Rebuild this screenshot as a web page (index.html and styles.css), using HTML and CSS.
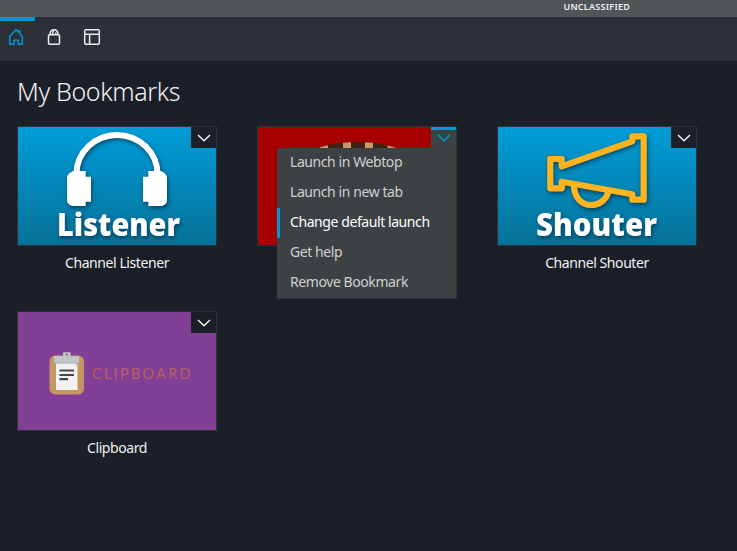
FILE: index.html
```html
<!DOCTYPE html>
<html lang="en">
<head>
<meta charset="utf-8">
<title>My Bookmarks</title>
<link rel="stylesheet" href="styles.css">
</head>
<body>
<div class="banner"><span class="banner-text">UNCLASSIFIED</span></div>
<nav class="toolbar">
  <a class="tab active"><svg width="16" height="18" viewBox="0 0 16 18"><path d="M1.700 8.500 8 1.700l2.300 2.300V3h1.700v3l2.300 2.500V16.300H10.300v-4H6v4H1.700z"/></svg></a>
  <a class="tab bag"><svg width="14" height="18" viewBox="0 0 14 18"><rect x="1.500" y="6.700" width="11" height="9.600" rx="1"/><path d="M3 6.500C3 3 5 1.700 7 1.700S11 3 11 6.500M5.500 6.500C5.500 4 6.500 3 7 2.600M8.800 6.500V4.500"/></svg></a>
  <a class="tab"><svg width="18" height="18" viewBox="0 0 18 18"><rect x="1.700" y="1.700" width="14.600" height="14.600" rx="1.200"/><path d="M2 6.200h14M6.600 6.200v10"/></svg></a>
</nav>
<main>
  <h1>My Bookmarks</h1>
  <div class="grid">
    <article class="card">
      <div class="thumb blue">
        <svg class="art" viewBox="0 0 198 118">
          <g class="shadow">
            <path class="band" d="M58.500 48V47A40.500 39 0 0 1 139.500 47V48"/>
            <path class="white" d="M55 44H67.700V49.700H73V74.700H67.700V79H54Q49 77 49 74V50Q50 46 55 44zM143 44H130.300V49.700H125V74.700H130.300V79H144Q149 77 149 74V50Q148 46 143 44z"/>
            <text class="logo" x="39" y="108.500" textLength="123" lengthAdjust="spacingAndGlyphs">Listener</text>
          </g>
        </svg>
        <button class="menu-btn"><svg width="14" height="8" viewBox="0 0 14 8"><path d="M1 1l6 5.800L13 1"/></svg></button>
      </div>
      <p>Channel Listener</p>
    </article>
    <article class="card">
      <div class="thumb red">
        <svg class="art" viewBox="0 0 198 118">
          <clipPath id="barrel"><ellipse cx="99" cy="59" rx="77" ry="44"/></clipPath>
          <g clip-path="url(#barrel)">
            <path class="dark" d="M20 10H178V110H20z"/>
            <path class="tan" d="M40 10h7v90h-7zM62 10h8v90h-8zM85 10h8v90h-8zM107 10h8v90h-8zM129.500 10h8v90h-8zM152 10h7v90h-7z"/>
          </g>
        </svg>
        <button class="menu-btn open"><svg width="14" height="8" viewBox="0 0 14 8"><path d="M1 1l6 5.800L13 1"/></svg></button>
        <ul class="menu">
          <li>Launch in Webtop</li>
          <li>Launch in new tab</li>
          <li class="selected">Change default launch</li>
          <li>Get help</li>
          <li>Remove Bookmark</li>
        </ul>
      </div>
    </article>
    <article class="card">
      <div class="thumb blue">
        <svg class="art" viewBox="0 0 198 118">
          <g class="shadow">
            <path class="horn" d="M52.300 32H63.700V39.300L134.300 14.300V9.300H145.700V72.700H134.300V67.300L63.700 54.700V61.300H52.300z"/>
            <path class="horn" d="M76 58C76 70 83 78 93 78C102 78 109 72 110.500 64"/>
            <text class="logo" x="38" y="108.500" textLength="121" lengthAdjust="spacingAndGlyphs">Shouter</text>
          </g>
        </svg>
        <button class="menu-btn"><svg width="14" height="8" viewBox="0 0 14 8"><path d="M1 1l6 5.800L13 1"/></svg></button>
      </div>
      <p>Channel Shouter</p>
    </article>
    <article class="card">
      <div class="thumb purple">
        <svg class="art" viewBox="0 0 198 118">
          <rect class="board" x="31.500" y="43.500" width="34.500" height="39" rx="6"/>
          <path class="paper" d="M38 50H57L59.500 54V78H38z"/>
          <path class="fold" d="M56 51.500h3.500V55z"/>
          <path class="clip" d="M45 44V41.500Q45 40.300 46 40.300H51.500Q52.700 40.300 52.700 41.500V44H61V51H36V44z"/>
          <circle class="hole" cx="48.800" cy="42.500" r="0.900"/>
          <path class="clip-edge" d="M36 51H61"/>
          <path class="lines" d="M41.500 58.500H56M41.500 63H56M41.500 67.200H50"/>
          <text class="clip-text" x="74" y="67" textLength="98.500" lengthAdjust="spacing">CLIPBOARD</text>
        </svg>
        <button class="menu-btn"><svg width="14" height="8" viewBox="0 0 14 8"><path d="M1 1l6 5.800L13 1"/></svg></button>
      </div>
      <p>Clipboard</p>
    </article>
  </div>
</main>
</body>
</html>
```
FILE: styles.css
```css
* { box-sizing: border-box; }
body {
  margin: 0;
  height: 551px;
  overflow: hidden;
  background: #1b1f27;
  color: #f2f2f2;
  font-family: "Noto Sans", "Open Sans", sans-serif;
  font-size: 14px;
}
.banner {
  height: 17px;
  padding-left: 563.5px;
  background: #505557;
  font-size: 9px;
  font-weight: 600;
  line-height: 13px;
  letter-spacing: 0.25px;
  white-space: nowrap;
}
.toolbar {
  display: flex;
  height: 44px;
  background: #2c3038;
}
.tab {
  display: flex;
  justify-content: center;
  width: 38px;
  padding-top: 11px;
  color: #ededed;
}
.tab.active {
  width: 35px;
  padding-top: 7px;
  padding-right: 3px;
  border-top: 4px solid #009bd2;
  color: #009bd2;
}
.tab svg { fill: none; stroke: currentColor; stroke-width: 1.5; }
main { padding: 14px 17px; }
h1 {
  margin: 0;
  height: 51px;
  font-size: 25px;
  font-weight: 300;
  line-height: 32px;
  letter-spacing: -0.35px;
}
.grid {
  display: grid;
  grid-template-columns: repeat(3, 200px);
  grid-auto-rows: 145px;
  gap: 40px;
}
.thumb {
  position: relative;
  width: 200px;
  height: 120px;
  border: 1px solid #2c3038;
}
.blue { background: linear-gradient(#009dd8, #077198); }
.red { background: #a80000; }
.purple { background: #813f95; }
.art { display: block; width: 198px; height: 118px; }
.menu-btn {
  position: absolute;
  top: 0;
  right: 0;
  display: flex;
  align-items: center;
  justify-content: center;
  width: 25px;
  height: 21px;
  padding: 1px 0 0;
  border: 0;
  background: #1b1f27;
  color: #f2f2f2;
}
.menu-btn svg { fill: none; stroke: currentColor; stroke-width: 1.5; }
.menu-btn.open {
  background: #3c4143;
  border-top: 3px solid #009bd2;
  padding: 0 0 2px;
  color: #009bd2;
}
.menu {
  position: absolute;
  top: 21px;
  right: -1px;
  width: 180px;
  height: 151px;
  margin: 0;
  padding: 0;
  border: solid #2c3038;
  border-width: 0 1px 1px 0;
  background: #3c4143;
  color: #d0d0d0;
  letter-spacing: -0.42px;
  list-style: none;
}
.menu li {
  height: 30px;
  padding-left: 13px;
  line-height: 28px;
  white-space: nowrap;
}
.menu .selected {
  padding-left: 10px;
  border-left: 3px solid #009bd2;
  color: #fff;
}
.card p {
  margin: 6px 0 0;
  line-height: 22px;
  letter-spacing: -0.42px;
  text-align: center;
}
.shadow { filter: drop-shadow(1px 2px 2px rgba(0, 20, 40, 0.6)); }
.white { fill: #fff; }
.band { fill: none; stroke: #fff; stroke-width: 6; }
.logo { fill: #fff; font: 900 32px "Noto Sans", "Open Sans", sans-serif; }
.horn { fill: none; stroke: #ffb41f; stroke-width: 6.2; stroke-linejoin: round; }
.dark { fill: #3b2416; }
.tan { fill: #c99a68; }
.board { fill: #c59765; }
.paper { fill: #f2f2f2; }
.fold { fill: #cfcfcf; }
.clip { fill: #c4c5c7; }
.hole { fill: #6b4a78; }
.clip-edge { stroke: #a8a9ab; stroke-width: 1; }
.lines { stroke: #45454d; stroke-width: 2.2; }
.clip-text { fill: #b9605f; font: 400 14.5px Lato, sans-serif; }
```
